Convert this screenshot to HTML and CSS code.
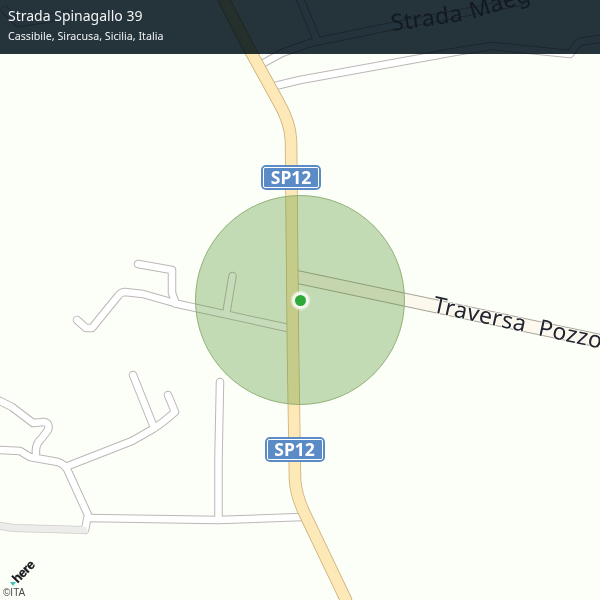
FILE: index.html
```html
<!DOCTYPE html>
<html lang="it">
<head>
<meta charset="utf-8">
<title>Strada Spinagallo 39</title>
<link rel="stylesheet" href="styles.css">
</head>
<body>
<main class="map">
  <svg class="map-canvas" width="600" height="600" viewBox="0 0 600 600" xmlns="http://www.w3.org/2000/svg">
    <defs>
      <path id="r1" d="M153 425L133 375"/>
      <path id="r2" d="M68 466L132 441L153 429L163 422L175 412L168 395"/>
      <path id="r3" d="M0 450L20 451L30 457L58 462Q64 464 67 469L88 515L85 530"/>
      <path id="r4" d="M0 401L12 407L33 423L44 422Q50 423 48 430L42 438Q35 444 36 453"/>
      <path id="r5" d="M88 518L218 520L302 517"/>
      <path id="r6" d="M218.500 518L218.500 458L220 382"/>
      <path id="r7" d="M288 328L178 304L143 294L125 292Q121 292 118 296L92 328L86 328L77 320"/>
      <path id="r8" d="M176 304L172 293L172 270L138 264"/>
      <path id="r9" d="M226.500 312L232.500 276"/>
      <path id="r10" d="M275 86L300 80L460 51L492 46L570 54L576 46Q578 42 584 41L600 39"/>
      <path id="r11" d="M260 65L282 53L310 43L393 26L520 2"/>
      <path id="r12" d="M299 -4L316 38"/>
      <path id="r13" d="M0 526L14 528L84 530"/>
      <path id="r14" d="M5 10L18 23L46 19L66 14"/>
      <path id="main" d="M224 0L252 54L279 103Q290 122 291 140L293 350L295 480Q296 494 303 510L346 600"/>
      <path id="trav" d="M295 276.500L600 341"/>
    </defs>
    <g class="case-minor">
      <use href="#r1"/><use href="#r2"/><use href="#r3"/><use href="#r4"/><use href="#r5"/><use href="#r6"/>
      <use href="#r7"/><use href="#r8"/><use href="#r9"/><use href="#r10"/><use href="#r11"/><use href="#r12"/><use href="#r14"/>
    </g>
    <use href="#r13" class="case-grey"/>
    <g class="fill-minor">
      <use href="#r1"/><use href="#r2"/><use href="#r3"/><use href="#r4"/><use href="#r5"/><use href="#r6"/>
      <use href="#r7"/><use href="#r8"/><use href="#r9"/><use href="#r10"/><use href="#r11"/><use href="#r12"/><use href="#r14"/>
    </g>
    <use href="#r13" class="fill-grey"/>
    <use href="#trav" class="case-trav"/>
    <use href="#trav" class="fill-trav"/>
    <use href="#main" class="case-main"/>
    <use href="#main" class="fill-main"/>
    <text class="road-label" transform="translate(432 312) rotate(12.300)">Traversa  Pozzo</text>
    <text class="road-label road-label-dim" transform="translate(392 31) rotate(-8)">Strada</text>
    <text class="road-label road-label-dim" transform="translate(472 19) rotate(-17)">Maeg</text>
    <circle class="radius" cx="300" cy="300" r="104.500"/>
    <circle class="dot-halo" cx="300.500" cy="300.500" r="10"/>
    <circle class="dot-ring" cx="300.500" cy="300.500" r="8.500"/>
    <circle class="dot" cx="300.500" cy="300.500" r="5.500"/>
  </svg>

  <div class="shield shield-north"><span class="shield-inner">SP12</span></div>
  <div class="shield shield-south"><span class="shield-inner">SP12</span></div>

  <header class="topbar">
    <h1 class="topbar-title">Strada Spinagallo 39</h1>
    <p class="topbar-sub">Cassibile, Siracusa, Sicilia, Italia</p>
  </header>

  <div class="attrib">
    <div class="here-logo"><span class="here-word">here</span><span class="here-tip"></span></div>
    <span class="attrib-copy">©ITA</span>
  </div>
</main>
</body>
</html>
```
FILE: styles.css
```css
* { box-sizing: border-box; }
html, body { margin: 0; padding: 0; }
body { width: 600px; height: 600px; overflow: hidden; }

.map {
  position: relative;
  width: 600px;
  height: 600px;
  background: #fbfff8;
  overflow: hidden;
  isolation: isolate;
  font-family: "Noto Sans", sans-serif;
}
.map-canvas { display: block; }
.map-canvas use { fill: none; stroke-linejoin: round; stroke-linecap: round; }

.case-minor { stroke: #bdb7b7; stroke-width: 8.500px; fill: none; stroke-linejoin: round; stroke-linecap: round; }
.fill-minor { stroke: #ffffff; stroke-width: 6.500px; fill: none; stroke-linejoin: round; stroke-linecap: round; }
.case-grey { stroke: #cfcbc8; stroke-width: 8px; }
.fill-grey { stroke: #ececea; stroke-width: 6.500px; }
.map-canvas .case-trav { stroke: #a8a398; stroke-width: 14px; stroke-linecap: butt; }
.map-canvas .fill-trav { stroke: #fdf8ee; stroke-width: 12px; stroke-linecap: butt; }
.map-canvas .case-main { stroke: #cfb27a; stroke-width: 12.500px; }
.map-canvas .fill-main { stroke: #fde9b8; stroke-width: 10.800px; }

.road-label {
  font-family: "Noto Sans", sans-serif;
  font-size: 23px;
  letter-spacing: 0.4px;
  fill: #24242e;
  stroke: #fbfff8;
  stroke-width: 1.500px;
  paint-order: stroke;
  white-space: pre;
}
.road-label-dim { fill: #7c7f85; stroke: none; }

.radius { fill: rgba(87, 150, 50, 0.34); stroke: #93b177; stroke-width: 1px; }
.dot-halo { fill: rgba(255, 255, 255, 0.35); }
.dot-ring { fill: #f4f7f0; }
.dot { fill: #2ea838; }

.shield {
  position: absolute;
  width: 60px;
  height: 25px;
  padding: 2px;
  background: #5a8bc6;
  border-radius: 5px;
}
.shield-north { left: 261px; top: 165px; }
.shield-south { left: 264.500px; top: 437px; }
.shield-inner {
  display: flex;
  align-items: center;
  justify-content: center;
  height: 100%;
  background: #5a8bc6;
  border: 1.500px solid #ffffff;
  border-radius: 2px;
  color: #ffffff;
  font-weight: 700;
  font-size: 17.500px;
  line-height: 1;
}

.topbar {
  position: absolute;
  left: 0;
  top: 0;
  width: 600px;
  height: 54px;
  padding: 7px 8px 0;
  color: #f2f4f5;
}
.topbar::before {
  content: "";
  position: absolute;
  inset: 0;
  background: #25333c;
  mix-blend-mode: multiply;
}
.topbar-title { position: relative; margin: 0; font-size: 14px; line-height: 18px; font-weight: 400; }
.topbar-sub { position: relative; margin: 4px 0 0; font-size: 10.700px; line-height: 14px; }

.attrib { position: absolute; left: 3px; top: 562px; width: 50px; height: 36px; }
.here-logo { position: absolute; left: 6px; top: 1px; width: 32px; height: 24px; }
.here-word {
  position: absolute;
  left: 2px;
  top: 2px;
  display: block;
  transform: rotate(-45deg);
  font-family: "Liberation Sans", sans-serif;
  font-weight: 700;
  font-size: 13px;
  line-height: 14px;
  letter-spacing: -0.5px;
  color: #17171c;
  -webkit-text-stroke: 0.3px #17171c;
}
.here-tip {
  position: absolute;
  left: 1px;
  top: 19px;
  width: 0;
  height: 0;
  border-left: 3.500px solid transparent;
  border-right: 3.500px solid transparent;
  border-top: 4px solid #3fc2b0;
}
.attrib-copy {
  position: absolute;
  left: 0;
  top: 24.500px;
  font-family: "Liberation Sans", sans-serif;
  font-size: 10px;
  line-height: 12px;
  color: #4a4a4a;
}
```
